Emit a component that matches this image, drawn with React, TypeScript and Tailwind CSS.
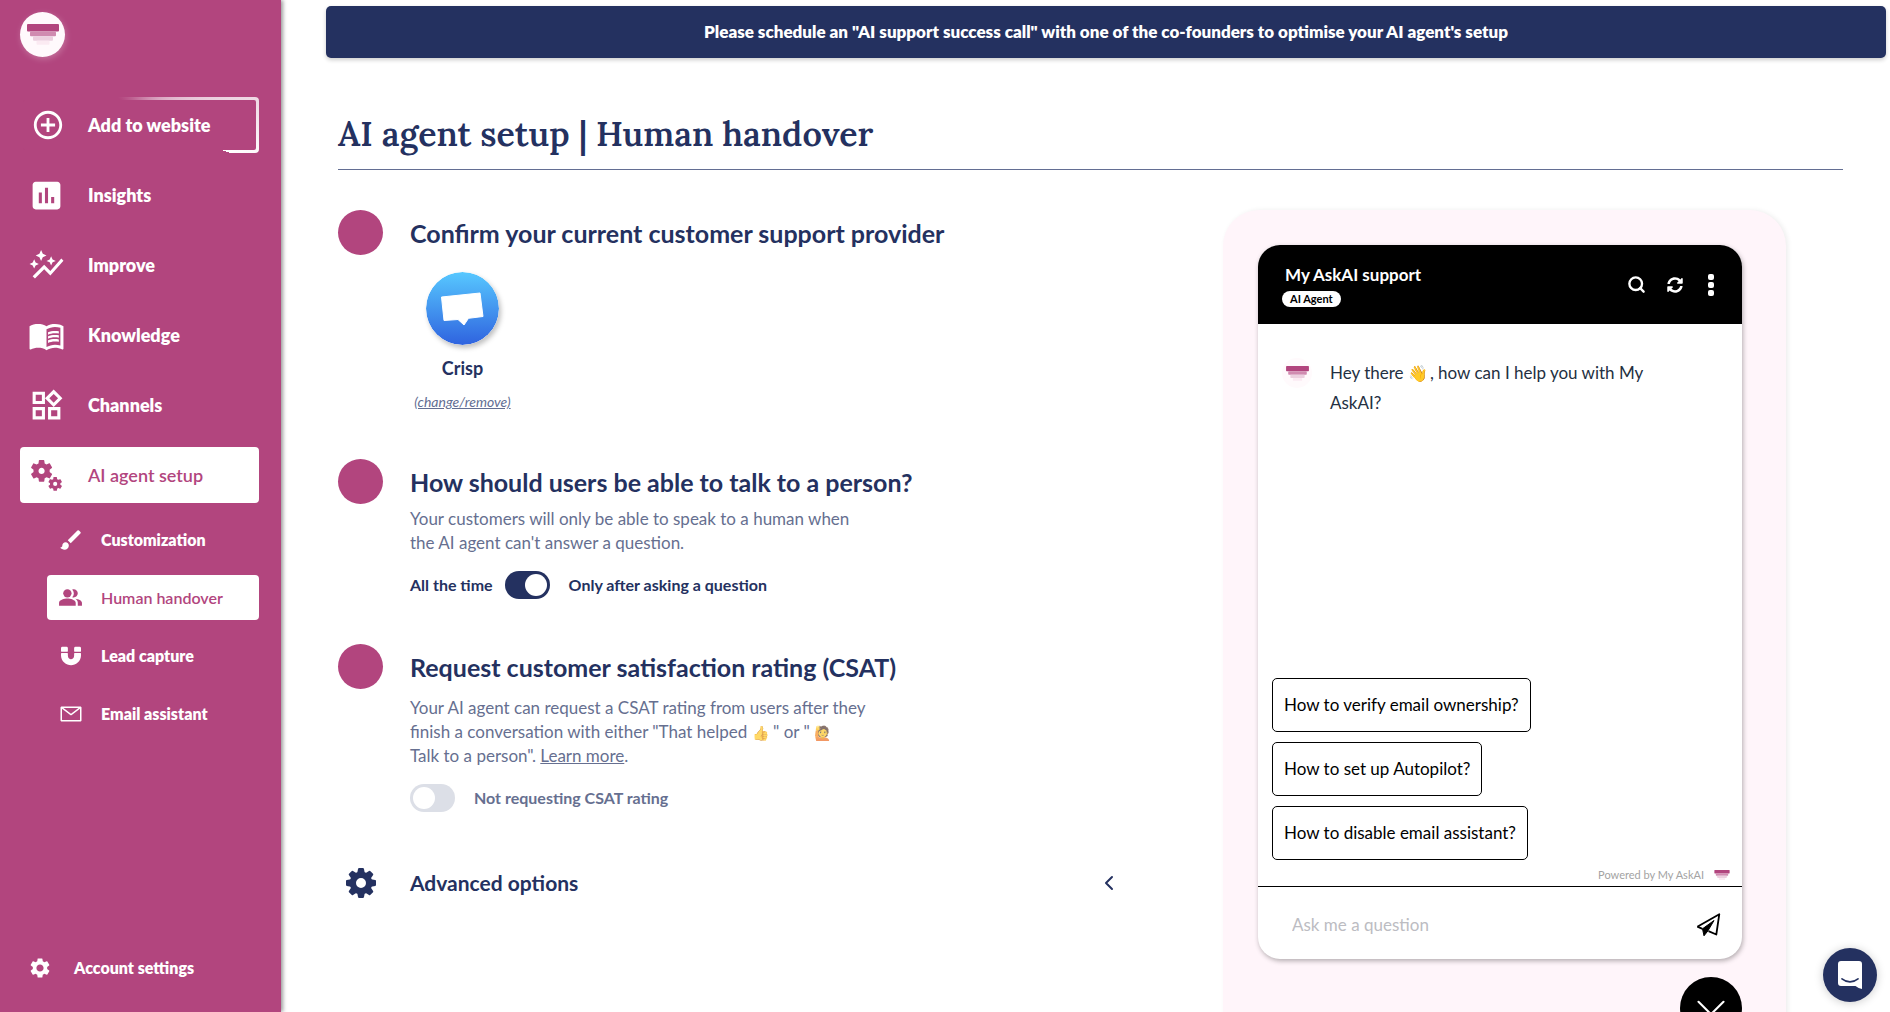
import { useState } from "react";
import type { ComponentType, ReactNode } from "react";
import {
  MdAddCircleOutline,
  MdAutoGraph,
  MdBrush,
  MdInsertChart,
  MdMenuBook,
  MdMiscellaneousServices,
  MdOutlineWidgets,
  MdPeopleAlt,
  MdSettings,
} from "react-icons/md";
import { FaMagnet, FaSyncAlt } from "react-icons/fa";
import { VscMail } from "react-icons/vsc";
import { ChevronDown, ChevronLeft, Search } from "lucide-react";

type Icon = ComponentType<{ size?: number | string; className?: string }>;

const mainNav: { label: string; icon: Icon; size: number }[] = [
  { label: "Insights", icon: MdInsertChart, size: 37 },
  { label: "Improve", icon: MdAutoGraph, size: 37 },
  { label: "Knowledge", icon: MdMenuBook, size: 37 },
  { label: "Channels", icon: MdOutlineWidgets, size: 37 },
  { label: "AI agent setup", icon: MdMiscellaneousServices, size: 37 },
];

const subNav: { label: string; icon: Icon; size: number }[] = [
  { label: "Customization", icon: MdBrush, size: 26 },
  { label: "Human handover", icon: MdPeopleAlt, size: 25 },
  { label: "Lead capture", icon: FaMagnet, size: 20 },
  { label: "Email assistant", icon: VscMail, size: 24 },
];

const suggestions = [
  "How to verify email ownership?",
  "How to set up Autopilot?",
  "How to disable email assistant?",
];

function LogoBars({ className }: { className: string }) {
  return (
    <svg viewBox="0 0 32 21" className={className} aria-hidden="true">
      <rect x="0" y="0" width="32" height="7.4" rx="1" fill="#b2457e" />
      <rect x="3" y="7.4" width="26" height="4.8" rx="1" fill="#d08bb0" />
      <rect x="6" y="12.2" width="20" height="4.6" rx="1" fill="#ecd0df" />
      <rect x="9.500" y="16.800" width="13" height="4" rx="1" fill="#fbeaf2" />
    </svg>
  );
}

function CogIcon() {
  return (
    <svg viewBox="-15 -15 30 30" className="size-[30px]" fill="#243160" aria-hidden="true">
      <path
        fillRule="evenodd"
        d="M0-11.300A11.300 11.300 0 1 1 0 11.300A11.300 11.300 0 1 1 0-11.300ZM0-5A5 5 0 1 0 0 5A5 5 0 1 0 0-5Z"
      />
      {[0, 45, 90, 135, 180, 225, 270, 315].map((a) => (
        <path key={a} transform={`rotate(${a})`} d="M-3.800-10L-2.900-14.200Q-2.700-15-2-15H2Q2.700-15 2.900-14.200L3.800-10Z" />
      ))}
    </svg>
  );
}

function CrispLogo() {
  return (
    <svg viewBox="0 0 73 73" className="size-[73px] rounded-full shadow-[2px_3px_5px_rgba(0,0,0,0.25)]" aria-hidden="true">
      <defs>
        <linearGradient id="crisp" x1="0" y1="0" x2="0" y2="1">
          <stop offset="0" stopColor="#57c8ff" />
          <stop offset="1" stopColor="#2f63df" />
        </linearGradient>
      </defs>
      <circle cx="36.500" cy="36.500" r="36.500" fill="url(#crisp)" />
      <path d="M15.500 25L54 21L57 44.500L42.500 46.300L38 53L32 47.500L18 48.500Z" fill="#fff" stroke="#fff" strokeLinejoin="round" />
    </svg>
  );
}

function SendIcon() {
  return (
    <svg viewBox="0 0 25 24" className="h-6 w-[25px]" fill="none" stroke="#000" strokeWidth="1.800" strokeLinejoin="round" aria-hidden="true">
      <path d="M1.300 13.700L23.300 1.200L20.300 21.500L12.500 18.200M1.300 13.700L6.500 15.800" />
      <path d="M6.500 15.800L18 7.500L11.800 18L8 22.800Z" fill="#000" strokeWidth="1" />
    </svg>
  );
}

function Sidebar() {
  return (
    <aside className="relative z-10 flex w-[281px] shrink-0 flex-col bg-[#b2457e] text-white shadow-[2px_0_4px_rgba(0,0,0,0.4)]">
      <a href="#home" aria-label="Home" className="mt-3 ml-5 flex size-[45px] items-center justify-center rounded-full bg-[#fff9fc] shadow-[1px_2px_6px_rgba(255,255,255,0.25)]">
        <LogoBars className="h-[21px] w-8" />
      </a>
      <nav aria-label="Main" className="mt-10 mr-[22px] ml-5 flex flex-col gap-[14px]">
        <a
          href="#add-to-website"
          className="flex h-14 rounded bg-[conic-gradient(from_107deg,transparent_0deg,transparent_215deg,#ffffff_360deg)] p-[3px]"
        >
          <span className="flex flex-1 items-center rounded-xs bg-[#b2457e] text-lg font-extrabold">
            <span className="flex w-[65px] justify-center pr-[15px]">
              <MdAddCircleOutline size={34} />
            </span>
            Add to website
          </span>
        </a>
        {mainNav.map(({ label, icon: Glyph, size }) => {
          const active = label === "AI agent setup";
          return (
            <a
              key={label}
              href={`#${label.toLowerCase().replaceAll(" ", "-")}`}
              aria-current={active ? "true" : undefined}
              className={`flex h-14 items-center rounded text-lg ${
                active ? "bg-white font-semibold text-[#b2457e]" : "font-extrabold"
              }`}
            >
              <span className="flex w-[68px] justify-center pr-4">
                <Glyph size={size} />
              </span>
              {label}
            </a>
          );
        })}
        <div className="ml-[27px] flex flex-col gap-[13px]">
          {subNav.map(({ label, icon: Glyph, size }) => {
            const active = label === "Human handover";
            return (
              <a
                key={label}
                href={`#${label.toLowerCase().replaceAll(" ", "-")}`}
                aria-current={active ? "page" : undefined}
                className={`flex h-[45px] items-center rounded text-base ${
                  active ? "bg-white font-semibold text-[#b2457e]" : "font-extrabold"
                }`}
              >
                <span className="flex w-[54px] justify-center pr-[7px]">
                  <Glyph size={size} />
                </span>
                {label}
              </a>
            );
          })}
        </div>
      </nav>
      <a href="#account" className="mt-auto mb-8 ml-7 flex items-center gap-[22px] text-base font-extrabold">
        <MdSettings size={24} />
        Account settings
      </a>
    </aside>
  );
}

function Toggle({ label, defaultOn }: { label: string; defaultOn: boolean }) {
  const [on, setOn] = useState(defaultOn);
  return (
    <span className="relative inline-flex h-7 w-[45px] shrink-0">
      <input
        type="checkbox"
        role="switch"
        aria-label={label}
        checked={on}
        onChange={() => setOn(!on)}
        className="peer h-full w-full cursor-pointer appearance-none rounded-full bg-[#dcdfe7] checked:bg-[#243160]"
      />
      <span className="pointer-events-none absolute top-[3px] left-[3px] size-[22px] rounded-full bg-white peer-checked:left-5" />
    </span>
  );
}

function Step({ title, children }: { title: string; children: ReactNode }) {
  return (
    <section className="flex gap-[27px]">
      <span className="size-[45px] shrink-0 rounded-full bg-[#b2457e]" />
      <div className="flex-1">
        <h2 className="flex h-[47px] items-center text-[25px] font-bold">{title}</h2>
        {children}
      </div>
    </section>
  );
}

function Setup() {
  return (
    <div className="flex-1 pr-[102px]">
      <Step title="Confirm your current customer support provider">
        <div className="mt-[15px] flex w-[105px] flex-col items-center">
          <CrispLogo />
          <p className="mt-[9px] text-lg leading-7 font-bold">Crisp</p>
          <a href="#provider" className="mt-[10px] text-[14px] leading-5 text-[#636e93] italic underline">
            (change/remove)
          </a>
        </div>
      </Step>
      <div className="mt-[47px]">
        <Step title="How should users be able to talk to a person?">
          <p className="mt-px text-[17px] leading-6 text-[#666f90]">
            Your customers will only be able to speak to a human when
            <br />
            the AI agent can't answer a question.
          </p>
          <div className="mt-4 flex items-center text-base font-bold">
            All the time
            <span className="mr-[19px] ml-3 flex">
              <Toggle label="Only after asking a question" defaultOn />
            </span>
            Only after asking a question
          </div>
        </Step>
      </div>
      <div className="mt-[45px]">
        <Step title="Request customer satisfaction rating (CSAT)">
          <p className="mt-[5px] text-[17px] leading-6 text-[#666f90]">
            Your AI agent can request a CSAT rating from users after they
            <br />
            finish a conversation with either "That helped <span className="text-sm leading-none opacity-70">👍</span> " or "{" "}
            <span className="text-sm leading-none opacity-70">🙋</span>
            <br />
            Talk to a person".{" "}
            <a href="#learn-more" className="underline">
              Learn more
            </a>
            .
          </p>
          <div className="mt-4 flex items-center gap-[19px] text-base font-bold text-[#666f90]">
            <Toggle label="Request CSAT rating" defaultOn={false} />
            Not requesting CSAT rating
          </div>
        </Step>
      </div>
      <button type="button" className="mt-12 flex h-[45px] w-full items-center gap-[27px] text-[21px] font-bold">
        <span className="flex w-[45px] justify-center">
          <CogIcon />
        </span>
        Advanced options
        <ChevronLeft size={24} strokeWidth={2} className="ml-auto" />
      </button>
    </div>
  );
}

function ChatPreview() {
  return (
    <div className="relative w-[563px] shrink-0 self-start rounded-[36px] bg-[#fff5fa] pt-[35px] pr-11 pb-24 pl-[35px] shadow-[2px_0_5px_rgba(0,0,0,0.07)]">
      <div className="overflow-hidden rounded-[22px] bg-white text-black shadow-[1px_2px_5px_rgba(0,0,0,0.3)]">
        <header className="flex h-[79px] items-center justify-between bg-black pr-6 pl-6 text-white">
          <div>
            <h3 className="pl-[3px] text-[17px] leading-6 font-bold">My AskAI support</h3>
            <span className="mt-1 block w-fit rounded-full bg-white px-2 text-[11px] leading-4 font-bold text-black">
              AI Agent
            </span>
          </div>
          <div className="flex items-center gap-[21px]">
            <button type="button" aria-label="Search" className="flex">
              <Search size={19} strokeWidth={3} />
            </button>
            <button type="button" aria-label="Restart chat" className="flex">
              <FaSyncAlt size={16} />
            </button>
            <button type="button" aria-label="More" className="flex w-[14px] flex-col items-center gap-[2px]">
              <span className="size-[6px] rounded-xs bg-white" />
              <span className="size-[6px] rounded-xs bg-white" />
              <span className="size-[6px] rounded-xs bg-white" />
            </button>
          </div>
        </header>
        <div className="flex h-[354px] gap-[18px] pt-[34px] pr-[90px] pl-6">
          <span className="flex size-[30px] shrink-0 items-center justify-center rounded-full bg-[#fffafc]">
            <LogoBars className="h-[15px] w-[23px]" />
          </span>
          <p className="text-[17px] leading-[30px] text-[#243042]">
            Hey there <span className="inline-block h-5 w-[22px] text-base leading-5">👋</span>, how can I help you with My AskAI?
          </p>
        </div>
        <div className="flex flex-col items-start gap-[10px] px-[14px]">
          {suggestions.map((s) => (
            <button key={s} type="button" className="h-[54px] rounded-[5px] border border-black px-[11px] text-[17px]">
              {s}
            </button>
          ))}
        </div>
        <div className="flex h-[26px] items-center justify-end gap-[10px] pt-1 pr-3 text-[11px] text-[#a3a3a3]">
          Powered by My AskAI
          <LogoBars className="h-[10px] w-4" />
        </div>
        <form className="flex h-[73px] items-center border-t border-black pt-1 pr-[21px] pl-[34px]" onSubmit={(e) => e.preventDefault()}>
          <input
            type="text"
            aria-label="Ask me a question"
            placeholder="Ask me a question"
            className="flex-1 text-[17px] outline-none placeholder:text-[#bcbcc2]"
          />
          <button type="submit" aria-label="Send" className="flex">
            <SendIcon />
          </button>
        </form>
      </div>
      <button
        type="button"
        aria-label="Close chat"
        className="mt-[18px] ml-auto flex size-[62px] items-center justify-center rounded-full bg-black text-white"
      >
        <ChevronDown size={50} strokeWidth={1} />
      </button>
    </div>
  );
}

export default function App() {
  return (
    <div className="flex h-screen overflow-hidden bg-white font-['Lato',sans-serif] text-[#243160]">
      <Sidebar />
      <main className="flex min-w-0 flex-1 flex-col pl-[45px]">
        <a
          href="#schedule"
          className="mt-[6px] mr-1 flex h-[52px] shrink-0 items-center justify-center rounded-[5px] bg-[#243160] text-[17px] font-extrabold text-white shadow-[0_2px_4px_rgba(0,0,0,0.2)]"
        >
          Please schedule an "AI support success call" with one of the co-founders to optimise your AI agent's setup
        </a>
        <div className="mr-[47px] ml-3 flex flex-col">
          <h1 className="mt-[52px] border-b border-[#636e93] pb-[11px] font-['Lora','Liberation_Serif',serif] text-[34px] leading-12 font-semibold">
            AI agent setup | Human handover
          </h1>
          <div className="mt-10 mr-[57px] flex">
            <Setup />
            <ChatPreview />
          </div>
        </div>
      </main>
      <button
        type="button"
        aria-label="Open messenger"
        className="fixed right-[13px] bottom-[10px] z-20 flex size-[54px] items-center justify-center rounded-full bg-[#243160] shadow-[0_1px_10px_rgba(0,0,0,0.2)]"
      >
        <svg viewBox="0 0 24 28" className="h-7 w-6" aria-hidden="true">
          <path d="M3 0H21Q24 0 24 3V28Q20.500 27.300 17.500 25H3Q0 25 0 22V3Q0 0 3 0Z" fill="#fff" />
          <path d="M4 17.800Q12 24 20 17.800" fill="none" stroke="#243160" strokeWidth="1.700" strokeLinecap="round" />
        </svg>
      </button>
    </div>
  );
}
